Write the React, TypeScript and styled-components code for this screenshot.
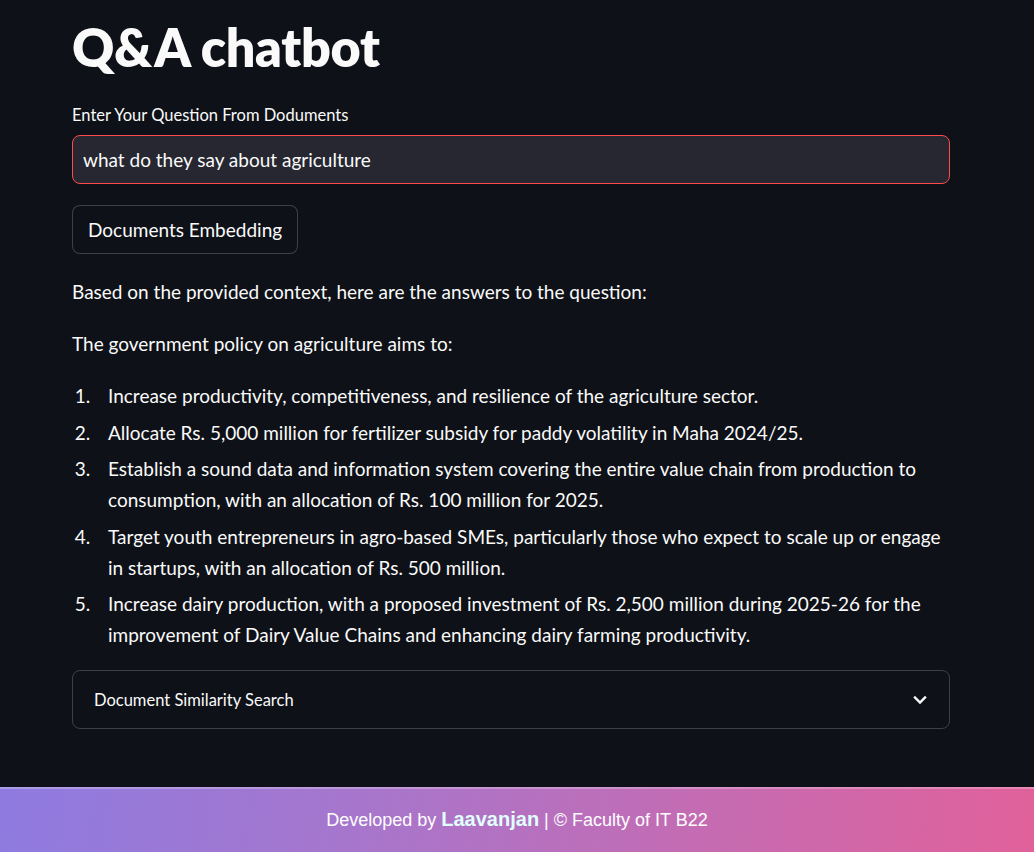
import React from 'react'
import styled, { createGlobalStyle } from 'styled-components'

const GlobalStyle = createGlobalStyle`
  html, body {
    margin: 0;
    padding: 0;
    background: #0e1117;
  }
  body {
    font-family: Lato, "Noto Sans", sans-serif;
    color: #fafafa;
  }
`

const Page = styled.div`
  display: flex;
  flex-flow: column nowrap;
  min-height: 852px;
  background: #0e1117;
`

const Main = styled.main`
  flex: 1;
  width: 878px;
  margin-left: 72px;
  padding-top: 16px;
`

const Title = styled.h1`
  margin: 0;
  font-size: 52px;
  line-height: 62px;
  font-weight: 800;
  letter-spacing: -0.3px;
`

const Label = styled.label`
  display: block;
  margin-top: 26px;
  font-size: 16.5px;
  line-height: 22px;
`

const Input = styled.input`
  box-sizing: border-box;
  display: block;
  width: 100%;
  height: 49px;
  margin-top: 9px;
  padding: 0 10px;
  background: #262730;
  border: 1px solid #ff4b4b;
  border-radius: 8px;
  color: #fafafa;
  font-family: inherit;
  font-size: 19px;
  outline: none;
  caret-color: #fafafa;
`

const Button = styled.button`
  display: block;
  height: 49px;
  margin-top: 21px;
  padding: 0 15px;
  background: #0e1117;
  border: 1px solid rgba(250, 250, 250, 0.2);
  border-radius: 8px;
  color: #fafafa;
  font-family: inherit;
  font-size: 19px;
`

const Answer = styled.div`
  margin-top: 22px;
  font-size: 19px;
  line-height: 31px;

  p {
    margin: 0 0 21px;
  }

  ol {
    margin: 0;
    padding-left: 23px;
  }

  li {
    margin-bottom: 5.5px;
    padding-left: 13px;
  }
`

const Expander = styled.div`
  box-sizing: border-box;
  display: flex;
  align-items: center;
  justify-content: space-between;
  height: 59px;
  margin-top: 20px;
  padding: 0 22px 0 21px;
  border: 1px solid rgba(250, 250, 250, 0.2);
  border-radius: 8px;
  font-size: 16.5px;
`

const Footer = styled.footer`
  height: 65px;
  display: flex;
  align-items: center;
  justify-content: center;
  border-top: 2px solid rgba(255, 255, 255, 0.25);
  box-sizing: border-box;
  background: linear-gradient(100deg, #8e7be0 0%, #a776cc 35%, #cb69ad 75%, #e1619a 100%);
  font-family: "Liberation Sans", Arial, sans-serif;
  font-size: 18px;
  color: #ffffff;
  padding-bottom: 3px;
`

const Author = styled.span`
  color: #e0ffff;
  font-size: 20px;
  font-weight: 700;
`

const Chevron = () => (
  <svg width="14" height="10" viewBox="0 0 14 10" fill="none">
    <path d="M2 2.5 L7 7.5 L12 2.5" stroke="#fafafa" strokeWidth="2.4" strokeLinecap="square" />
  </svg>
)

export default function App() {
  return (
    <Page>
      <GlobalStyle />
      <Main>
        <Title>Q&amp;A chatbot</Title>
        <Label>Enter Your Question From Doduments</Label>
        <Input defaultValue="what do they say about agriculture" />
        <Button>Documents Embedding</Button>
        <Answer>
          <p>Based on the provided context, here are the answers to the question:</p>
          <p>The government policy on agriculture aims to:</p>
          <ol>
            <li>Increase productivity, competitiveness, and resilience of the agriculture sector.</li>
            <li>Allocate Rs. 5,000 million for fertilizer subsidy for paddy volatility in Maha 2024/25.</li>
            <li>Establish a sound data and information system covering the entire value chain from production to consumption, with an allocation of Rs. 100 million for 2025.</li>
            <li>Target youth entrepreneurs in agro-based SMEs, particularly those who expect to scale up or engage in startups, with an allocation of Rs. 500 million.</li>
            <li>Increase dairy production, with a proposed investment of Rs. 2,500 million during 2025-26 for the improvement of Dairy Value Chains and enhancing dairy farming productivity.</li>
          </ol>
        </Answer>
        <Expander>
          <span>Document Similarity Search</span>
          <Chevron />
        </Expander>
      </Main>
      <Footer>
        <span>
          Developed by <Author>Laavanjan</Author> | © Faculty of IT B22
        </span>
      </Footer>
    </Page>
  )
}
